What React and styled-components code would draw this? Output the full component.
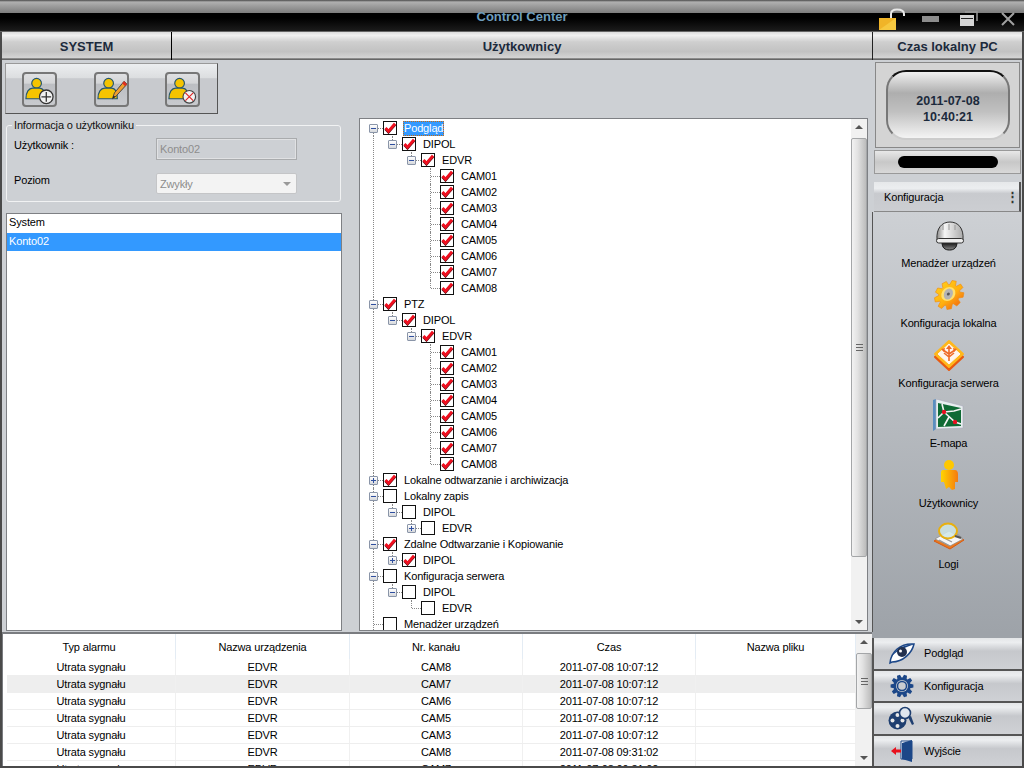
import React from 'react'
import styled, { createGlobalStyle } from 'styled-components'

const GlobalStyle = createGlobalStyle`
  html, body { margin: 0; padding: 0; background: #444; }
  * { box-sizing: border-box; }
  body { font-family: "Liberation Sans", Arial, sans-serif; font-size: 11px; letter-spacing: -0.15px; color: #000; }
`

const tree = [
  { label: 'Podgląd', checked: true, selected: true, open: true, kids: [
    { label: 'DIPOL', checked: true, open: true, kids: [
      { label: 'EDVR', checked: true, open: true, kids: ['CAM01','CAM02','CAM03','CAM04','CAM05','CAM06','CAM07','CAM08'].map(label => ({ label, checked: true })) },
    ] },
  ] },
  { label: 'PTZ', checked: true, open: true, kids: [
    { label: 'DIPOL', checked: true, open: true, kids: [
      { label: 'EDVR', checked: true, open: true, kids: ['CAM01','CAM02','CAM03','CAM04','CAM05','CAM06','CAM07','CAM08'].map(label => ({ label, checked: true })) },
    ] },
  ] },
  { label: 'Lokalne odtwarzanie i archiwizacja', checked: true, closed: true },
  { label: 'Lokalny zapis', open: true, kids: [
    { label: 'DIPOL', open: true, kids: [{ label: 'EDVR', closed: true }] },
  ] },
  { label: 'Zdalne Odtwarzanie i Kopiowanie', checked: true, open: true, kids: [
    { label: 'DIPOL', checked: true, closed: true },
  ] },
  { label: 'Konfiguracja serwera', open: true, kids: [
    { label: 'DIPOL', open: true, kids: [{ label: 'EDVR' }] },
  ] },
  { label: 'Menadżer urządzeń' },
  { label: 'Inne' },
]

function flatten(nodes, parents = [], root = true) {
  return nodes.flatMap((node, i) => {
    const hasNext = i < nodes.length - 1
    const row = { ...node, parents, hasNext, isFirstRoot: root && i === 0 }
    return [row, ...(node.kids ? flatten(node.kids, [...parents, hasNext], false) : [])]
  })
}

const alarms = [
  ['CAM8', '10:07:12'],
  ['CAM7', '10:07:12'],
  ['CAM6', '10:07:12'],
  ['CAM5', '10:07:12'],
  ['CAM3', '10:07:12'],
  ['CAM8', '09:31:02'],
  ['CAM7', '09:31:02'],
]

const gearPath = (cx, cy, outer, inner, teeth) => {
  const pts = []
  const step = (Math.PI * 2) / teeth
  for (let i = 0; i < teeth; i++) {
    const a = i * step
    const at = (r, d) => `${(cx + r * Math.cos(a + d)).toFixed(2)} ${(cy + r * Math.sin(a + d)).toFixed(2)}`
    pts.push(at(inner, -step * 0.42), at(outer, -step * 0.22), at(outer, step * 0.22), at(inner, step * 0.42))
  }
  return `M${pts.join('L')}Z`
}

function UserGlyph({ children }) {
  return (
    <svg width="32" height="32" viewBox="0 0 32 32">
      <circle cx="13" cy="9" r="5" fill="#f5c400" stroke="#24566e" strokeWidth="1.2" />
      <path d="M2 25c0-7 3-11 7-11h7c4 0 6 4 6 11z" fill="#f5c400" stroke="#24566e" strokeWidth="1.2" />
      {children}
    </svg>
  )
}

const AddUser = () => (
  <UserGlyph>
    <circle cx="23" cy="23" r="7" fill="#f2f2f2" stroke="#333" strokeWidth="1.3" />
    <path d="M23 18v10M18 23h10" stroke="#333" strokeWidth="1.3" />
  </UserGlyph>
)
const EditUser = () => (
  <UserGlyph>
    <path d="M17 25l2-6L29 7l3 3-11 12z" fill="#f0a030" stroke="#444" strokeWidth="1" />
    <path d="M27 9l3 3 2-2-3-3z" fill="#e03020" />
    <path d="M17 25l1-3 2 1z" fill="#222" />
  </UserGlyph>
)
const DeleteUser = () => (
  <UserGlyph>
    <circle cx="23" cy="23" r="6.5" fill="#f2f2f2" stroke="#444" strokeWidth="1.2" />
    <path d="M19 19l8 8M27 19l-8 8" stroke="#e02828" strokeWidth="1.2" />
  </UserGlyph>
)

const DomeIcon = () => (
  <svg width="32" height="32" viewBox="0 0 32 32">
    <defs>
      <linearGradient id="lensG" x1="0" y1="0" x2="0" y2="1"><stop offset="0" stopColor="#050505" /><stop offset="1" stopColor="#8c8c8c" /></linearGradient>
      <linearGradient id="domeG" x1="0" y1="0" x2="1" y2="0"><stop offset="0" stopColor="#8a8a8a" /><stop offset=".3" stopColor="#f6f6f6" /><stop offset="1" stopColor="#aaa" /></linearGradient>
    </defs>
    <path d="M9 23h15c0 6-3 8-7.500 8S9 29 9 23z" fill="url(#lensG)" stroke="#111" />
    <path d="M4 21C3 9 9 3 17 3s14 6 13 18z" fill="url(#domeG)" stroke="#333" />
    <path d="M10 6v5M16 5v6M22 6v5" stroke="#999" />
    <rect x="3.500" y="19.500" width="27" height="4.500" rx="2.200" fill="#eee" stroke="#333" />
  </svg>
)
const GearIcon = () => (
  <svg width="32" height="32" viewBox="0 0 32 32">
    <defs>
      <linearGradient id="gearG" x1="0" y1="0" x2="1" y2="1"><stop offset="0" stopColor="#ffd21c" /><stop offset=".55" stopColor="#ffb010" /><stop offset="1" stopColor="#f05a10" /></linearGradient>
    </defs>
    <g transform="translate(3 0) skewX(-10)">
      <path d={gearPath(16, 16, 14.5, 10.5, 9)} fill="url(#gearG)" stroke="#ef8a10" strokeWidth=".6" />
      <circle cx="15" cy="15" r="7" fill="#ffe070" />
      <ellipse cx="15" cy="15" rx="4.500" ry="5.500" fill="#b4b4b4" />
      <circle cx="15" cy="15" r="1.500" fill="#555" />
    </g>
  </svg>
)
const ServerIcon = () => (
  <svg width="32" height="32" viewBox="0 0 32 32">
    <path d="M16 5l14 13-14 13L2 18z" fill="#e85a10" stroke="#e85a10" strokeWidth="2" strokeLinejoin="round" />
    <path d="M16 2l14 13-14 13L2 15z" fill="#ffb81c" stroke="#ffb81c" strokeWidth="2" strokeLinejoin="round" />
    <path d="M16 5l11 10-11 10L5 15z" fill="#fff6ee" stroke="#fff6ee" strokeLinejoin="round" />
    <path d="M16 22V9M16 15l-6-4M16 15l6-4M16 18l-5-4M16 18l5-4" stroke="#ee6a28" strokeWidth="1.600" fill="none" />
    <path d="M16 6l-3 4h6zM8 10l4-1-1 4zM24 10l-4-1 1 4z" fill="#ee6a28" />
  </svg>
)
const MapIcon = () => (
  <svg width="32" height="32" viewBox="0 0 32 32">
    <path d="M0 1l3-1v30l-3 2z" fill="#5a8fc0" />
    <path d="M3 0l27 7v22l-27 1z" fill="#e8eef0" stroke="#aab" strokeWidth=".6" />
    <path d="M5 4l23 5v18L5 28z" fill="#0e6a34" />
    <path d="M5 19l6-6 11 10 6 2M11 13l-2-8M11 13l10-1 7-2M16 18l-5 9" stroke="#f4f4f4" strokeWidth="1.600" fill="none" />
    <circle cx="11" cy="13" r="2.200" fill="#e81020" />
    <circle cx="22" cy="23" r="2.200" fill="#e81020" />
  </svg>
)
const PersonIcon = () => (
  <svg width="32" height="32" viewBox="0 0 32 32">
    <defs>
      <linearGradient id="personG" x1="0" y1="0" x2="1" y2="0"><stop offset="0" stopColor="#ffd400" /><stop offset="1" stopColor="#f57a10" /></linearGradient>
    </defs>
    <circle cx="16" cy="6" r="5" fill="#ffc800" />
    <path d="M10 11h12c2 0 3 2 3 4v8h-3v7l-3 1-3-3-3 2-2-7H8v-8c0-2 0-4 2-4z" fill="url(#personG)" />
  </svg>
)
const LogIcon = () => (
  <svg width="32" height="32" viewBox="0 0 32 32">
    <path d="M1 21l15-9 15 8-14 9z" fill="#ea7a20" stroke="#d85a10" />
    <path d="M2 19l14-8 14 8-13 7z" fill="#f6f6f6" stroke="#888" strokeWidth=".7" />
    <path d="M6 20l11 6M9 17l10 5M24 14l5 4" stroke="#999" strokeWidth="1.200" />
    <ellipse cx="15" cy="11" rx="9" ry="7.500" fill="#cfe6e6" fillOpacity=".85" stroke="#e8b010" strokeWidth="2" />
    <path d="M22 16l6 2" stroke="#555" strokeWidth="2" />
  </svg>
)

const EyeIcon = () => (
  <svg width="26" height="24" viewBox="0 0 26 24">
    <path d="M1 22C2 11 11 2 25 3c-2 9-11 18-22 18z" fill="#fff" stroke="#1c4788" strokeWidth="1.500" />
    <path d="M3 15C7 7 15 4 25 3 19 6 8 9 3 15z" fill="#1c4788" />
    <circle cx="13" cy="11" r="5" fill="#22304e" />
    <circle cx="11.500" cy="10" r="1.500" fill="#fff" />
  </svg>
)
const BlueGearIcon = () => (
  <svg width="24" height="24" viewBox="0 0 24 24">
    <path d={gearPath(12, 12, 11.5, 8.5, 10)} fill="#1c4788" />
    <circle cx="12" cy="12" r="6" fill="#c9ccd0" />
    <circle cx="12" cy="12" r="4.500" fill="none" stroke="#1c4788" strokeWidth="1.500" />
  </svg>
)
const ReelIcon = () => (
  <svg width="28" height="24" viewBox="0 0 28 24">
    <circle cx="9.500" cy="14.500" r="9" fill="#1f3f70" />
    <circle cx="9.500" cy="9" r="2" fill="#e8e8e8" />
    <circle cx="9.500" cy="20" r="2" fill="#e8e8e8" />
    <circle cx="4.500" cy="14.500" r="2" fill="#e8e8e8" />
    <circle cx="14.500" cy="14.500" r="2" fill="#e8e8e8" />
    <circle cx="17" cy="7" r="5.500" fill="#dfe6ee" stroke="#1f3f70" strokeWidth="1.600" />
    <path d="M20 11l4 8 2-1-3-8z" fill="#1f3f70" />
  </svg>
)
const DoorIcon = () => (
  <svg width="24" height="26" viewBox="0 0 24 26">
    <path d="M11 3h11v18h-11z" fill="#fff" stroke="#1c4788" />
    <path d="M12 5l10-3v22l-10-3z" fill="#1c4788" />
    <path d="M1 13l5-4v2.500h5v3H6V17z" fill="#e8101c" />
  </svg>
)

function App() {
  const rows = flatten(tree)
  return (
    <Window>
      <GlobalStyle />
      <TitleBar>
        <span />
        <Title>Control Center</Title>
        <Controls>
          <Control>
            <svg width="27" height="22" viewBox="0 0 27 22">
              <path d="M13 10V6c0-3 2-4.500 6-4.500s7 1.500 7 4.500v2" fill="none" stroke="#e8e8e8" strokeWidth="2" />
              <path d="M1 10h17v12H1z" fill="#f0b428" />
              <path d="M1 22l17-12v12z" fill="#f6c840" />
            </svg>
          </Control>
          <Control>
            <svg width="17" height="6" viewBox="0 0 17 6"><rect width="17" height="6" fill="#8c8c8c" /></svg>
          </Control>
          <Control>
            <svg width="18" height="15" viewBox="0 0 18 15">
              <path d="M5 1h12v9" fill="none" stroke="#9a9a9a" strokeWidth="1.500" />
              <rect x="0" y="4" width="14" height="11" fill="#d4d4d4" />
              <rect x="1" y="7" width="12" height="1" fill="#222" />
            </svg>
          </Control>
          <Control>
            <svg width="14" height="14" viewBox="0 0 14 14"><path d="M1 1l12 12M13 1L1 13" stroke="#a0a0a0" strokeWidth="2" /></svg>
          </Control>
        </Controls>
      </TitleBar>
      <Body>
        <Main>
          <Header>
            <HeaderCell $width="170px">SYSTEM</HeaderCell>
            <HeaderCell>Użytkownicy</HeaderCell>
          </Header>
          <Workspace>
            <LeftPane>
              <Toolbar>
                <ToolButton><AddUser /></ToolButton>
                <ToolButton><EditUser /></ToolButton>
                <ToolButton><DeleteUser /></ToolButton>
              </Toolbar>
              <Group>
                <Legend>Informacja o użytkowniku</Legend>
                <FieldRow>
                  <span>Użytkownik :</span>
                  <TextField>Konto02</TextField>
                </FieldRow>
                <FieldRow>
                  <span>Poziom</span>
                  <SelectField>Zwykły<SelectArrow /></SelectField>
                </FieldRow>
              </Group>
              <UserList>
                <UserRow>System</UserRow>
                <UserRow $active>Konto02</UserRow>
              </UserList>
            </LeftPane>
            <TreeBox>
              <TreeBody>
                {rows.map((row, i) => (
                  <TreeRow key={i}>
                    {row.parents.map((more, j) => <Guide key={j} $down={more} />)}
                    <Branch $up={!row.isFirstRoot} $down={row.hasNext}>
                      {(row.open || row.closed) && <Expander $plus={row.closed} />}
                    </Branch>
                    <CheckBox>
                      {row.checked && (
                        <svg width="12" height="12" viewBox="0 0 12 12">
                          <path d="M1.500 6l3 3.200 6.500-7.500" fill="none" stroke="#5a0a10" strokeWidth="3" transform="translate(0 .7)" />
                          <path d="M1.500 6l3 3.200 6.500-7.500" fill="none" stroke="#f01020" strokeWidth="2.800" />
                        </svg>
                      )}
                    </CheckBox>
                    <TreeLabel $selected={row.selected}>{row.label}</TreeLabel>
                  </TreeRow>
                ))}
              </TreeBody>
              <Scrollbar $width="16px" $thumbTop="3px" $thumbHeight="419px" />
            </TreeBox>
          </Workspace>
          <AlarmPanel>
            <AlarmTable>
              <AlarmHead>
                <HeadCell>Typ alarmu</HeadCell>
                <HeadCell>Nazwa urządzenia</HeadCell>
                <HeadCell>Nr. kanału</HeadCell>
                <HeadCell>Czas</HeadCell>
                <HeadCell>Nazwa pliku</HeadCell>
              </AlarmHead>
              {alarms.map(([channel, time], i) => (
                <AlarmRow key={i} $shaded={i === 1}>
                  <AlarmCell>Utrata sygnału</AlarmCell>
                  <AlarmCell>EDVR</AlarmCell>
                  <AlarmCell>{channel}</AlarmCell>
                  <AlarmCell>2011-07-08 {time}</AlarmCell>
                  <AlarmCell />
                </AlarmRow>
              ))}
            </AlarmTable>
            <Scrollbar $width="16px" $thumbTop="3px" $thumbHeight="56px" />
          </AlarmPanel>
        </Main>
        <Sidebar>
          <HeaderCell $side>Czas lokalny PC</HeaderCell>
          <ClockPanel>
            <ClockFace>2011-07-08<br />10:40:21</ClockFace>
          </ClockPanel>
          <StatusPanel><StatusPill /></StatusPanel>
          <MenuTab>Konfiguracja<TabGrip>⋮</TabGrip></MenuTab>
          <Menu>
            <MenuItem><MenuIcon><DomeIcon /></MenuIcon>Menadżer urządzeń</MenuItem>
            <MenuItem><MenuIcon><GearIcon /></MenuIcon>Konfiguracja lokalna</MenuItem>
            <MenuItem><MenuIcon><ServerIcon /></MenuIcon>Konfiguracja serwera</MenuItem>
            <MenuItem><MenuIcon><MapIcon /></MenuIcon>E-mapa</MenuItem>
            <MenuItem><MenuIcon><PersonIcon /></MenuIcon>Użytkownicy</MenuItem>
            <MenuItem><MenuIcon><LogIcon /></MenuIcon>Logi</MenuItem>
          </Menu>
          <NavList>
            <NavButton><NavIcon><EyeIcon /></NavIcon>Podgląd</NavButton>
            <NavButton><NavIcon><BlueGearIcon /></NavIcon>Konfiguracja</NavButton>
            <NavButton><NavIcon><ReelIcon /></NavIcon>Wyszukiwanie</NavButton>
            <NavButton><NavIcon><DoorIcon /></NavIcon>Wyjście</NavButton>
          </NavList>
        </Sidebar>
      </Body>
    </Window>
  )
}

function Scrollbar({ $width, $thumbTop, $thumbHeight }) {
  return (
    <ScrollTrack $width={$width}>
      <ScrollArrow />
      <ScrollMiddle>
        <ScrollThumb $top={$thumbTop} $height={$thumbHeight}><Grip /></ScrollThumb>
      </ScrollMiddle>
      <ScrollArrow $down />
    </ScrollTrack>
  )
}

export default App

const Window = styled.div`
  width: 1024px;
  height: 768px;
  overflow: hidden;
  display: flex;
  flex-direction: column;
  background: #4a4a4a;
`
const TitleBar = styled.div`
  height: 32px;
  flex: none;
  display: grid;
  grid-template-columns: 1fr auto 1fr;
  align-items: center;
  background: linear-gradient(#4a4a4a 0, #b0b0b0 2px, #7c7c7c 13px, #000 13px, #000 18px, #1c1c1c 31px, #666 31px);
`
const Title = styled.div`
  padding: 1px 0 0 20px;
  color: #6f9dbb;
  font-weight: bold;
  font-size: 13px;
  letter-spacing: 0;
`
const Controls = styled.div`
  display: flex;
  justify-content: flex-end;
  gap: 7px;
  padding-top: 5px;
`
const Control = styled.div`
  width: 32px;
  height: 24px;
  display: flex;
  align-items: center;
  justify-content: center;
`
const Body = styled.div`
  flex: 1;
  min-height: 0;
  display: flex;
  padding: 0 2px 2px;
`
const Main = styled.div`
  width: 870px;
  flex: none;
  display: flex;
  flex-direction: column;
`
const Header = styled.div`
  height: 28px;
  flex: none;
  display: flex;
`
const HeaderCell = styled.div`
  ${p => (p.$width ? `width: ${p.$width}; flex: none; border-right: 1px solid #000;` : 'flex: 1;')}
  ${p => p.$side && 'height: 28px; flex: none; border-left: 1px solid #222;'}
  display: flex;
  align-items: center;
  justify-content: center;
  font-weight: bold;
  font-size: 13px;
  letter-spacing: 0;
  color: #1c2a3c;
  background: linear-gradient(#dcdcdc, #f2f2f2 12%, #cfcfcf 35%, #c2c2c2 70%, #d4d4d4 92%, #666 96%);
`
const Workspace = styled.div`
  height: 572px;
  flex: none;
  display: flex;
  align-items: flex-start;
  background: #cdd0d4;
`
const LeftPane = styled.div`
  width: 357px;
  flex: none;
  padding: 3px 0 0 3px;
  display: flex;
  flex-direction: column;
  align-items: flex-start;
`
const Toolbar = styled.div`
  width: 213px;
  height: 51px;
  display: flex;
  justify-content: space-between;
  padding: 8px 17px 0 16px;
  border: 1px solid #555;
  border-top-color: #999;
  border-left-color: #999;
  background: linear-gradient(#eceef0, #dcdee0 28%, #c8cace 30%, #c8cace 100%);
`
const ToolButton = styled.div`
  width: 35px;
  height: 35px;
  display: flex;
  align-items: center;
  justify-content: center;
  border: 2px solid #777;
  border-radius: 4px;
  background: linear-gradient(#dfe0e2, #d4d5d7 30%, #bcbec2 32%, #c8cace);
`
const Group = styled.fieldset`
  width: 335px;
  height: 84px;
  margin: 4px 0 0 1px;
  padding: 6px 7px 0;
  min-inline-size: 0;
  border: 1px solid #f1f2f3;
  border-radius: 3px;
  display: flex;
  flex-direction: column;
  gap: 13px;
`
const Legend = styled.legend`
  margin-left: -2px;
  padding: 0 2px;
  line-height: 14px;
  color: #111;
`
const FieldRow = styled.div`
  display: grid;
  grid-template-columns: 142px 141px;
  line-height: 14px;
`
const TextField = styled.div`
  height: 22px;
  padding: 0 3px;
  line-height: 20px;
  color: #8d8d8d;
  background: #cdd0d4;
  border: 1px solid #a9abad;
  box-shadow: inset 0 0 0 1px #e0e1e3;
`
const SelectField = styled.div`
  height: 21px;
  padding: 0 3px;
  line-height: 20px;
  display: flex;
  align-items: center;
  justify-content: space-between;
  color: #8d8d8d;
  background: #f3f3f3;
  border: 1px solid #c4c5c7;
  border-radius: 2px;
`
const SelectArrow = styled.i`
  margin-right: 2px;
  border-style: solid;
  border-width: 4px 4px 0;
  border-color: #999 transparent transparent;
`
const UserList = styled.div`
  width: 336px;
  height: 418px;
  margin: 11px 0 0 1px;
  border: 1px solid #7e8084;
  background: #fff;
`
const UserRow = styled.div`
  height: 18px;
  margin: 0 0 1px;
  padding-left: 2px;
  line-height: 17px;
  ${p => p.$active ? 'background: #3399ff; color: #fff;' : ''}
`
const TreeBox = styled.div`
  width: 509px;
  height: 513px;
  margin-top: 58px;
  flex: none;
  display: flex;
  border: 1px solid #7e8084;
  background: #fff;
`
const TreeBody = styled.div`
  flex: 1;
  min-width: 0;
  overflow: hidden;
  padding: 1px 0 0 4px;
`
const TreeRow = styled.div`
  height: 16px;
  display: flex;
  align-items: center;
`
const Guide = styled.div`
  width: 19px;
  height: 16px;
  flex: none;
  background: ${p => p.$down ? 'repeating-linear-gradient(#888 0 1px, transparent 1px 2px) 9px 0 / 1px 100% no-repeat' : 'none'};
`
const Branch = styled.div`
  position: relative;
  width: 19px;
  height: 16px;
  flex: none;
  display: flex;
  align-items: center;
  justify-content: center;
  &::before {
    content: "";
    position: absolute;
    left: 9px;
    top: ${p => (p.$up ? '0' : '8px')};
    height: ${p => (p.$up && p.$down ? '16px' : '8px')};
    border-left: 1px dotted #888;
  }
  &::after {
    content: "";
    position: absolute;
    left: 10px;
    top: 8px;
    width: 9px;
    border-top: 1px dotted #888;
  }
`
const Expander = styled.div`
  position: relative;
  z-index: 1;
  width: 9px;
  height: 9px;
  margin-top: 1px;
  border: 1px solid #8a95a8;
  border-radius: 1px;
  background:
    linear-gradient(#2f4f9f, #2f4f9f) center / 5px 1px no-repeat,
    ${p => (p.$plus ? 'linear-gradient(#2f4f9f, #2f4f9f) center / 1px 5px no-repeat,' : '')}
    linear-gradient(#fff, #d6d8dc);
`
const CheckBox = styled.div`
  width: 14px;
  height: 14px;
  flex: none;
  display: flex;
  align-items: center;
  justify-content: center;
  border: 1px solid #111;
  background: #fff;
`
const TreeLabel = styled.div`
  margin-left: ${p => (p.$selected ? '6px' : '7px')};
  padding: 0 ${p => (p.$selected ? '1px' : '0')};
  line-height: 15px;
  white-space: nowrap;
  ${p => p.$selected && 'background: #3399ff; color: #fff; outline: 1px dotted #c86a10; outline-offset: -1px;'}
`
const ScrollTrack = styled.div`
  width: ${p => p.$width};
  flex: none;
  display: flex;
  flex-direction: column;
  background: #f1f1f1;
`
const ScrollArrow = styled.div`
  height: 16px;
  flex: none;
  display: flex;
  align-items: center;
  justify-content: center;
  &::before {
    content: "";
    border-style: solid;
    border-width: ${p => (p.$down ? '4px 4px 0' : '0 4px 4px')};
    border-color: ${p => (p.$down ? '#555 transparent transparent' : 'transparent transparent #555')};
  }
`
const ScrollMiddle = styled.div`
  flex: 1;
  min-height: 0;
`
const ScrollThumb = styled.div`
  height: ${p => p.$height};
  margin-top: ${p => p.$top};
  display: flex;
  align-items: center;
  justify-content: center;
  border: 1px solid #a4a6a8;
  border-radius: 2px;
  background: linear-gradient(90deg, #f2f2f2, #e2e2e2 40%, #bcbcbc);
`
const Grip = styled.div`
  width: 7px;
  height: 7px;
  background: repeating-linear-gradient(#666 0 1px, transparent 1px 3px);
`
const AlarmPanel = styled.div`
  flex: 1;
  min-height: 0;
  display: flex;
  padding: 2px 0 0 1px;
  background: #7a7c80;
`
const AlarmTable = styled.div`
  flex: 1;
  min-width: 0;
  overflow: hidden;
  background: #fff;
`
const AlarmHead = styled.div`
  height: 25px;
  display: grid;
  grid-template-columns: 173px 174px 173px 173px 1fr;
`
const HeadCell = styled.div`
  display: flex;
  align-items: center;
  justify-content: center;
  border-right: 1px solid #e4ecf4;
`
const AlarmRow = styled.div`
  height: 17px;
  flex: none;
  margin-left: 4px;
  display: grid;
  grid-template-columns: 169px 174px 173px 173px 1fr;
  border-bottom: 1px solid #eee;
  background: ${p => (p.$shaded ? '#eeeeee' : '#fff')};
`
const AlarmCell = styled.div`
  display: flex;
  align-items: center;
  justify-content: center;
  border-right: 1px solid #f0f0f0;
`
const Sidebar = styled.div`
  width: 150px;
  flex: none;
  display: flex;
  flex-direction: column;
  background: #cdd0d4;
`
const ClockPanel = styled.div`
  height: 86px;
  margin: 2px 2px 0 3px;
  flex: none;
  padding: 7px 9px 7px 10px;
  border: 1px solid #888;
  background: #d4d4d4;
`
const ClockFace = styled.div`
  height: 100%;
  padding-top: 7px;
  display: flex;
  align-items: center;
  justify-content: center;
  text-align: center;
  font-weight: bold;
  font-size: 12.500px;
  letter-spacing: 0;
  line-height: 16px;
  color: #1c2a3c;
  border-radius: 20px;
  border: 2px solid;
  border-color: #111 #777 #ccc;
  background: linear-gradient(#f0f0f0, #aeaeae 32%, #c0c0c0 60%, #f4f4f4);
`
const StatusPanel = styled.div`
  height: 24px;
  margin: 2px 1px 0 2px;
  flex: none;
  display: flex;
  align-items: center;
  justify-content: center;
  border: 1px solid #999;
  background: linear-gradient(#e8e8e8, #c8c8c8 50%, #d8d8d8);
`
const StatusPill = styled.div`
  width: 100px;
  height: 12px;
  border-radius: 6px;
  background: #000;
`
const MenuTab = styled.div`
  height: 30px;
  margin: 8px 1px 0 2px;
  flex: none;
  display: flex;
  align-items: center;
  justify-content: space-between;
  padding: 0 0 0 10px;
  border-right: 2px solid #555;
  border-bottom: 1px solid #888;
  background: linear-gradient(#e6e8ea, #eceef0 22%, #c8cace 40%, #ccced2);
`
const TabGrip = styled.span`
  font-weight: bold;
  font-size: 13px;
  color: #333;
`
const Menu = styled.div`
  flex: 1;
  min-height: 0;
  padding-left: 2px;
  display: grid;
  grid-auto-rows: 60px;
  align-content: start;
  border-left: 1px solid #555;
  background: linear-gradient(#cdd0d4, #9ea3a9);
`
const MenuItem = styled.div`
  padding-top: 7px;
  display: flex;
  flex-direction: column;
  align-items: center;
  line-height: 14px;
  gap: 5px;
  &:last-child { padding-top: 8px; }
`
const MenuIcon = styled.div`
  height: 32px;
  display: flex;
  justify-content: center;
`
const NavList = styled.div`
  height: 134px;
  flex: none;
  display: flex;
  flex-direction: column;
  gap: 2px;
  padding-top: 6px;
  background: linear-gradient(#9ea3a9, #9ea3a9 6px, #555 6px);
`
const NavButton = styled.div`
  flex: 1;
  min-height: 0;
  display: flex;
  align-items: center;
  margin-left: 2px;
  background: linear-gradient(#e4e6e8, #eceef0 14%, #c6c8cc 42%, #cfd1d5);
`
const NavIcon = styled.div`
  width: 28px;
  margin: 0 8px 0 14px;
  display: flex;
  justify-content: center;
`
